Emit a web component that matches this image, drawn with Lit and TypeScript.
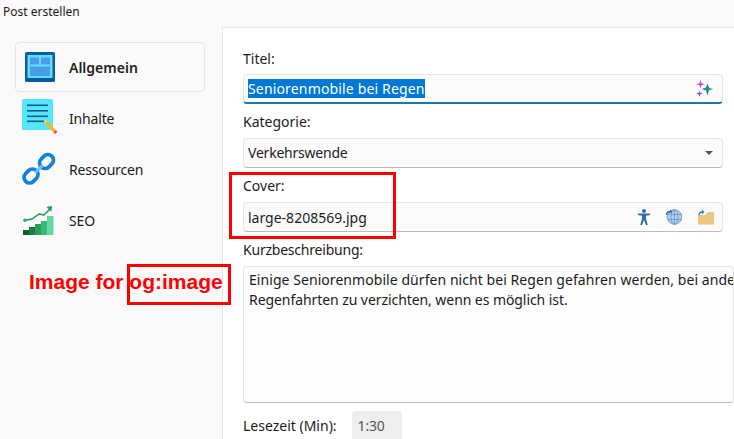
import { LitElement, html, css, svg } from "lit";
import { customElement } from "lit/decorators.js";

const iconGeneral = svg`<svg width="30" height="30" viewBox="0 0 30 30"><rect width="30" height="30" rx="1.5" fill="#0a5aa5"/><rect x="2.5" y="3" width="25" height="23" fill="#5fe0ff"/><rect x="5" y="5.5" width="9" height="7" fill="#4a9be8"/><rect x="16" y="5.5" width="9" height="7" fill="#4a9be8"/><rect x="5" y="14.5" width="20" height="9.500" fill="#4a9be8"/></svg>`;
const iconContent = svg`<svg width="37" height="37" viewBox="0 0 37 37"><rect x="0" y="0" width="31" height="31" rx="1.5" fill="#55e6ff"/><g fill="#0f5f80"><rect x="5" y="5.5" width="21" height="1.6"/><rect x="5" y="11" width="21" height="1.6"/><rect x="5" y="16.5" width="21" height="1.6"/><rect x="5" y="21.5" width="17" height="1.6"/></g><path d="M22 21l3 1 9 9-3 2-9-9z" fill="#f2b81c"/><path d="M22 21l3 1-1.500 2z" fill="#f3e3cf"/><path d="M31 33l3-2 1.500 2-2.500 2z" fill="#e8506a"/></svg>`;
const iconLink = svg`<svg width="34" height="34" viewBox="0 0 34 34" fill="none"><g stroke="#0f82dc" stroke-width="3.800"><rect x="-7.500" y="-5.500" width="15" height="11" rx="5.500" transform="translate(9 24) rotate(-45)"/><rect x="-7.500" y="-5.500" width="15" height="11" rx="5.500" transform="translate(24.500 9.500) rotate(-45)"/></g><path d="M13.500 20.500l7-7" stroke="#6cc0f5" stroke-width="3"/></svg>`;
const iconSeo = svg`<svg width="32" height="32" viewBox="0 0 32 32"><rect x="1" y="26" width="6.500" height="5" fill="#155c34"/><rect x="7" y="23" width="6.500" height="8" fill="#1c7a45"/><rect x="13" y="20" width="6.500" height="11" fill="#2a9d5c"/><rect x="19" y="17" width="6.500" height="14" fill="#3bb876"/><rect x="25" y="12" width="6.500" height="19" fill="#66d9a2"/><path d="M2 16.500l8-1.500 7-5 5 1 6-6" fill="none" stroke="#1c9a5a" stroke-width="1.500"/><circle cx="3" cy="16.300" r="1.800" fill="#2fae6b"/><path d="M24.500 3l5.500-1-.7 5.700z" fill="#1c9a5a"/></svg>`;
const sparkle = svg`<svg width="18" height="18" viewBox="0 0 18 18"><defs><linearGradient id="sg" x1="0" y1="0" x2="1" y2="0"><stop offset="0" stop-color="#3d9ad0"/><stop offset=".5" stop-color="#0e8f8a"/><stop offset="1" stop-color="#c9bf4a"/></linearGradient></defs><path d="M4.500 0l1 3.200 3.200 1-3.200 1-1 3.300-1-3.300-3.200-1 3.200-1z" fill="#d43fd6"/><path d="M3.500 10.500l.8 2.300 2.400.8-2.400.8-.8 2.600-.8-2.600-2.400-.8 2.400-.8z" fill="#7a4fe0"/><path d="M11.500 3.500l1.500 4 4.500 1.500-4.500 1.500-1.500 5-1.500-5-4.500-1.500 4.500-1.500z" fill="url(#sg)"/></svg>`;
const person = svg`<svg width="12" height="16" viewBox="0 0 12 16"><circle cx="6" cy="2" r="2" fill="#2f6fa8"/><path d="M0 4.500h12v1.600l-4 .6v3l1.800 6.300H8L6 11 4 16H2.200L4 9.700v-3L0 6.100z" fill="#2f6fa8"/></svg>`;
const globe = svg`<svg width="16" height="16" viewBox="0 0 16 16" fill="none"><circle cx="8.500" cy="8" r="7.300" fill="#b4cff0"/><g stroke="#6f98c8" stroke-width=".9"><circle cx="8.500" cy="8" r="7.300"/><ellipse cx="8.500" cy="8" rx="3.500" ry="7.300"/><path d="M1.500 5.500h14M1.500 10.500h14M8.500 .7v14.600"/></g><path d="M.5 6c0-2.500 1.500-3.500 4-3.500" stroke="#2f6fa8" stroke-width="1.300"/><path d="M4 .6l2.500 2-2.500 2z" fill="#2f6fa8"/></svg>`;
const folder = svg`<svg width="16" height="16" viewBox="0 0 16 16"><path d="M0 15.500V6h7l3-3h6v12.500z" fill="#eec583"/><path d="M1 6c0-2 1-3 3.500-3" fill="none" stroke="#2f78b8" stroke-width="1.300"/><path d="M4 .8l2.500 2.200L4 5.200z" fill="#2f78b8"/></svg>`;

@customElement("app-root")
export class AppRoot extends LitElement {
  static styles = css`
    :host { display: block; width: 734px; height: 439px; overflow: hidden; position: relative; background: #f9f9f9; color: #1b1b1b; font-family: "Noto Sans", "Open Sans", sans-serif; font-size: 14px; }
    .title { height: 27px; box-sizing: border-box; padding: 4px 0 0 3px; font-size: 12px; line-height: 16px; }
    .body { display: flex; height: 412px; }
    .nav { width: 222px; flex: none; box-sizing: border-box; padding: 15px 17px 0 15px; }
    .item { height: 51px; display: flex; align-items: center; box-sizing: border-box; padding-left: 7px; }
    .item.sel { height: 50px; background: #fafafa; border: 1px solid #e5e5e5; border-radius: 4px; padding-left: 9px; font-weight: 600; color: #222; }
    .ico { width: 47px; flex: none; display: flex; align-items: center; height: 40px; }
    .sel .ico { width: 44px; }
    .txt { padding-top: 2px; letter-spacing: -.17px; }
    .sel .txt { padding-top: 0; letter-spacing: 0; }
    .main { flex: 1; background: #fff; border-left: 1px solid #e5e5e5; border-top: 1px solid #e5e5e5; padding: 21px 0 0 20px; box-sizing: border-box; min-width: 0; }
    label { display: block; line-height: 20px; height: 20px; margin-bottom: 6px; }
    .first { margin-bottom: 5px; }
    .tight { letter-spacing: -.22px; }
    .field { width: 480px; height: 30px; box-sizing: border-box; background: #fbfbfb; border: 1px solid #e5e5e5; border-bottom-color: #bdbdbd; border-radius: 4px; display: flex; align-items: center; padding: 0 4px; margin-bottom: 8px; }
    .field.focus { border-bottom: 2px solid #1a7aa0; }
    .grow { flex: 1; white-space: nowrap; }
    .choice { padding-bottom: 2px; letter-spacing: -.22px; }
    .sel-text { background: #0078d4; color: #fff; line-height: 19px; letter-spacing: .16px; }
    .icons { display: flex; align-items: center; gap: 16px; padding-right: 4px; }
    .arrow { width: 0; height: 0; border-left: 4.500px solid transparent; border-right: 4.500px solid transparent; border-top: 4.500px solid #555; margin-right: 5px; }
    .area { width: 491px; height: 137px; box-sizing: border-box; background: #fdfdfd; border: 1px solid #e5e5e5; border-bottom-color: #bdbdbd; border-radius: 4px; padding: 3px 0 0 5px; line-height: 20px; margin-bottom: 8px; white-space: nowrap; overflow: hidden; letter-spacing: .06px; }
    .line { height: 20px; }
    .line.short { letter-spacing: -.07px; }
    .time { display: flex; align-items: flex-start; gap: 15px; }
    .time > span:first-child { line-height: 30px; }
    .box { width: 50px; height: 36px; background: #eeeeee; border-radius: 4px; box-sizing: border-box; padding-left: 6px; line-height: 30px; color: #555; letter-spacing: -.2px; }
    .red { position: absolute; border: 3px solid #f00; box-sizing: border-box; }
    .r1 { left: 229px; top: 172px; width: 167px; height: 67px; }
    .r2 { left: 127px; top: 264px; width: 104px; height: 41px; }
    .note { position: absolute; left: 29px; top: 269px; font: bold 21px/26px "Liberation Sans", Arial, sans-serif; color: #f00; white-space: nowrap; }
  `;
  render() {
    return html`
      <div class="title">Post erstellen</div>
      <div class="body">
        <nav class="nav">
          <div class="item sel"><span class="ico">${iconGeneral}</span><span class="txt">Allgemein</span></div>
          <div class="item"><span class="ico">${iconContent}</span><span class="txt">Inhalte</span></div>
          <div class="item"><span class="ico">${iconLink}</span><span class="txt">Ressourcen</span></div>
          <div class="item"><span class="ico">${iconSeo}</span><span class="txt">SEO</span></div>
        </nav>
        <main class="main">
          <label class="first">Titel:</label>
          <div class="field focus"><span class="grow"><span class="sel-text">Seniorenmobile bei Regen</span></span><span class="icons">${sparkle}</span></div>
          <label>Kategorie:</label>
          <div class="field"><span class="grow choice">Verkehrswende</span><span class="arrow"></span></div>
          <label>Cover:</label>
          <div class="field"><span class="grow">large-8208569.jpg</span><span class="icons">${person}${globe}${folder}</span></div>
          <label class="tight">Kurzbeschreibung:</label>
          <div class="area">
            <div class="line">Einige Seniorenmobile dürfen nicht bei Regen gefahren werden, bei anderen wird empfohlen, auf</div>
            <div class="line short">Regenfahrten zu verzichten, wenn es möglich ist.</div>
          </div>
          <div class="time"><span>Lesezeit (Min):</span><span class="box">1:30</span></div>
        </main>
      </div>
      <div class="red r1"></div>
      <div class="red r2"></div>
      <div class="note">Image for og:image</div>
    `;
  }
}
